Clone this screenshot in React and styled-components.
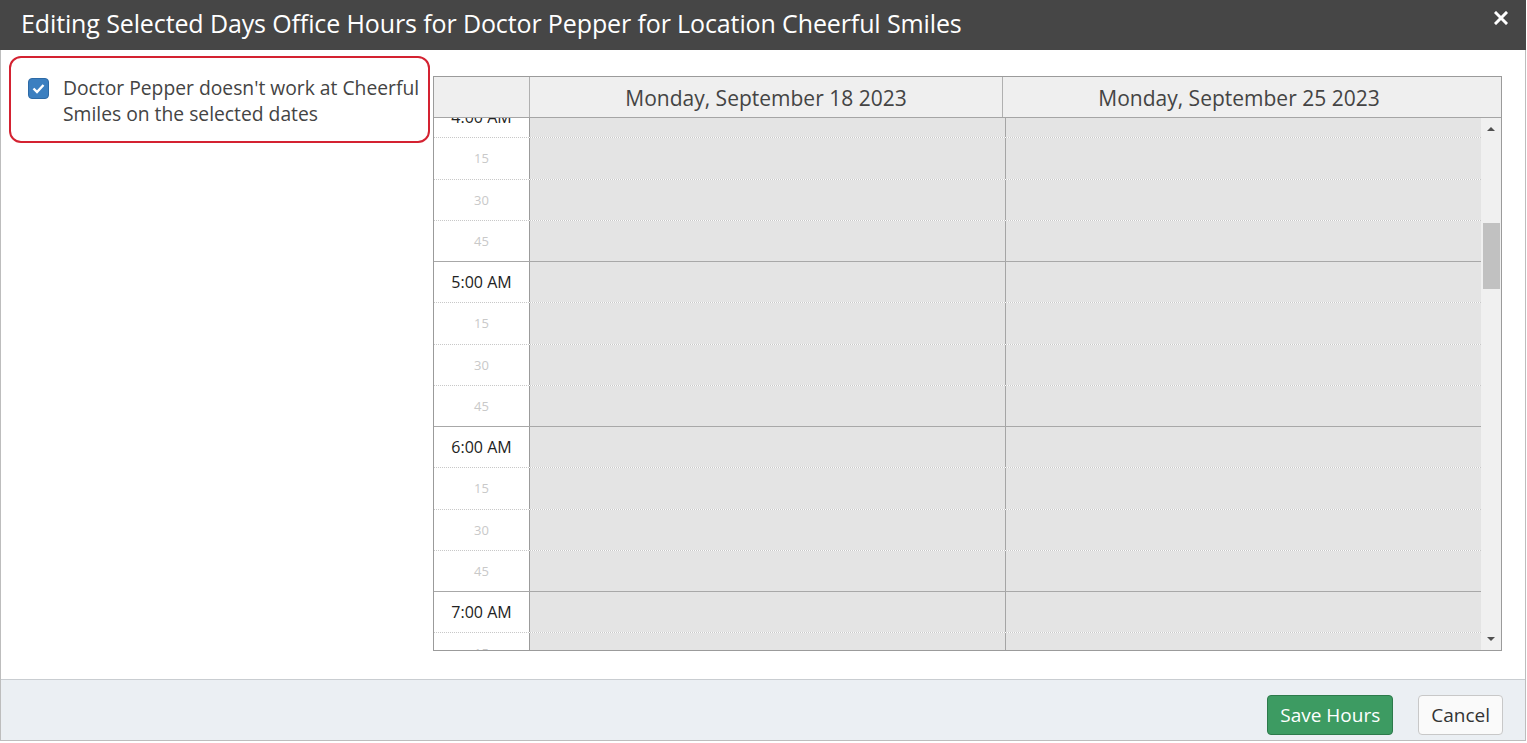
import React from 'react';
import styled, { createGlobalStyle } from 'styled-components';

const GlobalStyle = createGlobalStyle`
  html, body {
    margin: 0;
    padding: 0;
    background: #fff;
    font-family: "Open Sans", "Liberation Sans", sans-serif;
  }
  * { box-sizing: border-box; }
`;

const DAYS = ['Monday, September 18 2023', 'Monday, September 25 2023'];
const HOURS = ['4:00 AM', '5:00 AM', '6:00 AM', '7:00 AM'];
const QUARTERS = ['', '15', '30', '45'];

const Dialog = styled.div`
  width: 1526px;
  height: 741px;
  border: 1px solid #bdbdbd;
  border-top: none;
  display: flex;
  flex-direction: column;
  background: #fff;
`;

const TitleBar = styled.div`
  height: 50px;
  margin: 0 -1px;
  background: #464646;
  color: #fff;
  display: flex;
  align-items: center;
  justify-content: space-between;
  padding: 0 18px 4px 21px;
`;

const Title = styled.h1`
  margin: 0;
  font-size: 25px;
  font-weight: 400;
  letter-spacing: -0.12px;
`;

const CloseButton = styled.button`
  border: none;
  background: none;
  padding: 0;
  margin-top: -10px;
  display: flex;
  cursor: pointer;
`;

const Body = styled.div`
  flex: 1;
  display: flex;
  align-items: flex-start;
  padding: 6px 23px 0 8px;
`;

const Highlight = styled.div`
  width: 421px;
  height: 87px;
  border: 2px solid #d42231;
  border-radius: 12px;
  display: flex;
  align-items: flex-start;
  gap: 14px;
  padding: 17px 2px 0 17px;
`;

const CheckBox = styled.span`
  flex: none;
  width: 21px;
  height: 21px;
  border-radius: 4px;
  background: #3b7fc0;
  border: 1px solid #2d6aa6;
  display: flex;
  align-items: center;
  justify-content: center;
  margin-top: 3px;
`;

const Label = styled.span`
  font-size: 19.3px;
  line-height: 26px;
  color: #444;
`;

const Calendar = styled.div`
  margin: 20px 0 0 3px;
  flex: 1;
  height: 575px;
  border: 1px solid #9b9b9b;
  display: flex;
  flex-direction: column;
`;

const HeaderRow = styled.div`
  display: flex;
  height: 41px;
  background: #efefef;
  border-bottom: 1px solid #a5a5a5;
`;

const HeaderCell = styled.div`
  flex: ${(p) => (p.$time ? 'none' : '1')};
  width: ${(p) => (p.$time ? '96px' : 'auto')};
  border-right: ${(p) => (p.$last ? 'none' : '1px solid #b0b0b0')};
  display: flex;
  align-items: center;
  justify-content: center;
  font-size: 21px;
  color: #444;
  padding-top: 1px;
  padding-right: ${(p) => (p.$last ? '26px' : '0')};
`;

const GridArea = styled.div`
  flex: 1;
  display: flex;
  overflow: hidden;
`;

const Slots = styled.div`
  flex: 1;
  overflow: hidden;
`;

const SlotsInner = styled.div`
  margin-top: -21px;
`;

const SlotRow = styled.div`
  display: flex;
  height: 41.25px;
  border-bottom: ${(p) => (p.$hourEnd ? '1px solid #a8a8a8' : '1px dotted #c8c8c8')};
`;

const TimeCell = styled.div`
  flex: none;
  width: 96px;
  border-right: 1px solid #9b9b9b;
  background: #fff;
  display: flex;
  align-items: center;
  justify-content: center;
  font-size: ${(p) => (p.$hour ? '16px' : '13px')};
  color: ${(p) => (p.$hour ? '#222' : '#c9c9c9')};
`;

const DayCell = styled.div`
  flex: 1;
  background: #e4e4e4;
  border-right: ${(p) => (p.$divider ? '1px solid #a5a5a5' : 'none')};
`;

const ScrollTrack = styled.div`
  flex: none;
  width: 20px;
  background: #f0f0f0;
  display: flex;
  flex-direction: column;
  align-items: center;
`;

const Arrow = styled.div`
  width: 0;
  height: 0;
  border-left: 4px solid transparent;
  border-right: 4px solid transparent;
  ${(p) => (p.$down ? 'border-top: 4px solid #505050;' : 'border-bottom: 4px solid #505050;')}
  margin: ${(p) => (p.$down ? 'auto 0 9px' : '9px 0 0')};
`;

const Thumb = styled.div`
  width: 17px;
  height: 66px;
  margin-top: 92px;
  background: #c1c1c1;
`;

const Footer = styled.div`
  height: 61px;
  border-top: 1px solid #c9cdd1;
  background: #ebeff3;
  display: flex;
  align-items: center;
  justify-content: flex-end;
  gap: 25px;
  padding: 9px 22px 0 0;
`;

const Button = styled.button`
  height: 40px;
  padding: 0 12px;
  border-radius: 4px;
  font-family: "Open Sans", "Liberation Sans", sans-serif;
  font-size: 19px;
  cursor: pointer;
  color: ${(p) => (p.$primary ? '#fff' : '#333')};
  background: ${(p) => (p.$primary ? '#3d9b62' : '#fafafa')};
  border: 1px solid ${(p) => (p.$primary ? '#2d7a4b' : '#c8c8c8')};
`;

const slots = [];
HOURS.forEach((h) => {
  QUARTERS.forEach((q, i) => {
    slots.push({ label: i === 0 ? h : q, hour: i === 0, hourEnd: i === 3 });
  });
});

const App = () => (
  <>
    <GlobalStyle />
    <Dialog>
      <TitleBar>
        <Title>Editing Selected Days Office Hours for Doctor Pepper for Location Cheerful Smiles</Title>
        <CloseButton aria-label="Close">
          <svg width="14" height="14" viewBox="0 0 14 14">
            <path d="M2 2 L12 12 M12 2 L2 12" stroke="#fff" strokeWidth="3" strokeLinecap="square" />
          </svg>
        </CloseButton>
      </TitleBar>
      <Body>
        <Highlight>
          <CheckBox>
            <svg width="13" height="11" viewBox="0 0 13 11">
              <path d="M1.5 5.5 L5 9 L11.5 2" fill="none" stroke="#fff" strokeWidth="2.4" />
            </svg>
          </CheckBox>
          <Label>Doctor Pepper doesn't work at Cheerful Smiles on the selected dates</Label>
        </Highlight>
        <Calendar>
          <HeaderRow>
            <HeaderCell $time />
            <HeaderCell>{DAYS[0]}</HeaderCell>
            <HeaderCell $last>{DAYS[1]}</HeaderCell>
          </HeaderRow>
          <GridArea>
            <Slots>
              <SlotsInner>
                {slots.map((s, i) => (
                  <SlotRow key={i} $hourEnd={s.hourEnd}>
                    <TimeCell $hour={s.hour}>{s.label}</TimeCell>
                    <DayCell $divider />
                    <DayCell />
                  </SlotRow>
                ))}
              </SlotsInner>
            </Slots>
            <ScrollTrack>
              <Arrow />
              <Thumb />
              <Arrow $down />
            </ScrollTrack>
          </GridArea>
        </Calendar>
      </Body>
      <Footer>
        <Button $primary>Save Hours</Button>
        <Button>Cancel</Button>
      </Footer>
    </Dialog>
  </>
);

export default App;
